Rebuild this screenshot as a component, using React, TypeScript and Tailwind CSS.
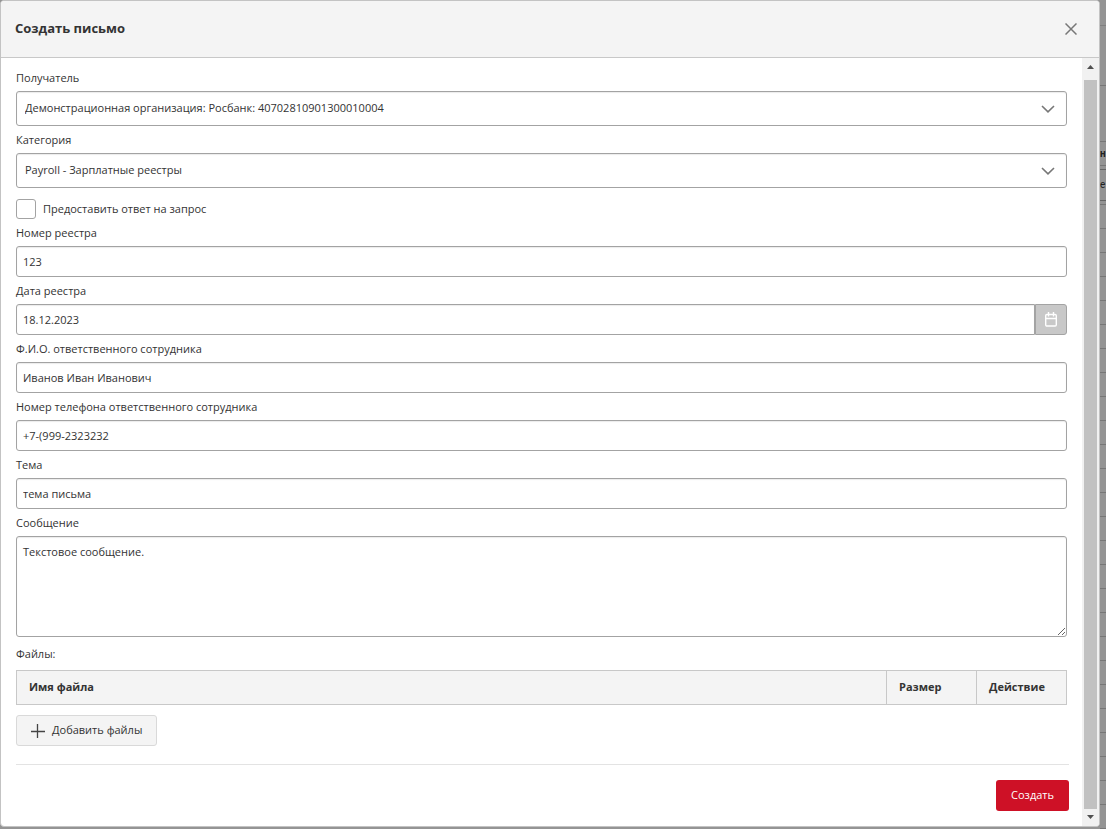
import React from 'react';

interface FieldProps {
  id: string;
  label: string;
  children: React.ReactNode;
}

const controlClass =
  'w-full rounded-[3px] border border-[#a3a3a3] bg-white text-[#333] outline-none shadow-[inset_0_1px_1px_rgba(0,0,0,0.08)]';

const Field: React.FC<FieldProps> = ({ id, label, children }) => (
  <div className="flex flex-col">
    <label htmlFor={id} className="py-1 leading-[19px]">
      {label}
    </label>
    {children}
  </div>
);

const TextField: React.FC<{ id: string; label: string; value: string }> = ({ id, label, value }) => (
  <Field id={id} label={label}>
    <input id={id} type="text" defaultValue={value} className={`${controlClass} h-[31px] px-1.5`} />
  </Field>
);

const SelectField: React.FC<{ id: string; label: string; value: string }> = ({ id, label, value }) => (
  <Field id={id} label={label}>
    <div className="relative">
      <select id={id} className={`${controlClass} h-[35px] appearance-none pl-2 pr-10`}>
        <option>{value}</option>
      </select>
      <svg
        className="pointer-events-none absolute right-3 top-3 h-3 w-[14px]"
        viewBox="0 0 14 12"
        fill="none"
        stroke="#777"
        strokeWidth="1.6"
      >
        <path d="M1 3L7 8.8L13 3" />
      </svg>
    </div>
  </Field>
);

const Scrollbar: React.FC = () => (
  <div className="flex w-[17px] shrink-0 flex-col items-center bg-[#f1f1f1]" aria-hidden="true">
    <svg className="h-[22px] w-[17px]" viewBox="0 0 17 22">
      <path d="M5 11h7L8.500 7z" fill="#505050" />
    </svg>
    <div className="w-[13px] flex-1 bg-[#c1c1c1]" />
    <svg className="h-[17px] w-[17px]" viewBox="0 0 17 17">
      <path d="M5 6h7L8.500 10z" fill="#505050" />
    </svg>
  </div>
);

const backdropRows = Array.from({ length: 26 }, (_, i) => i);

const Backdrop: React.FC = () => (
  <div className="w-1.5 shrink-0 overflow-hidden font-['Roboto','Noto_Sans',sans-serif] text-[10px] text-[#222]" aria-hidden="true">
    <div className="h-[26px] border-b border-[#808080]" />
    <div className="h-[60px] border-b border-[#777]" />
    <div className="h-[56px] border-b border-[#777]" />
    <div className="h-6 border-b border-[#777] font-bold leading-6">н</div>
    <div className="h-1 border-b border-[#666]" />
    <div className="h-[31px] border-b border-[#666] leading-[30px]">е</div>
    <div className="h-1 border-b border-[#777]" />
    {backdropRows.map((row) => (
      <div key={row} className="h-6 border-b border-[#777]" />
    ))}
  </div>
);

export default function App() {
  return (
    <div className="flex h-screen overflow-hidden bg-[#949494] font-['Open_Sans','Noto_Sans',sans-serif] text-[11px] text-[#333]">
      <div
        role="dialog"
        aria-labelledby="dialog-title"
        className="mb-0.5 flex min-w-0 flex-1 flex-col overflow-hidden rounded-[4px] border border-[#c3c3c3] bg-white"
      >
        <header className="flex h-[57px] shrink-0 items-center justify-between border-b border-[#c8c8c8] bg-[#f4f4f4] pl-3.5 pr-[22px]">
          <h1 id="dialog-title" className="text-[13px] font-bold">
            Создать письмо
          </h1>
          <button type="button" aria-label="Закрыть">
            <svg className="h-3 w-3" viewBox="0 0 12 12" stroke="#777" strokeWidth="1.5">
              <path d="M0.500 0.500L11.500 11.500M11.500 0.500L0.500 11.500" />
            </svg>
          </button>
        </header>

        <div className="flex min-h-0 flex-1">
          <form className="min-w-0 flex-1 overflow-hidden pl-[15px] pr-[13px] pt-1.5">
            <div className="pr-0.5">
              <SelectField
                id="recipient"
                label="Получатель"
                value="Демонстрационная организация: Росбанк: 40702810901300010004"
              />
              <SelectField id="category" label="Категория" value="Payroll - Зарплатные реестры" />

              <label className="flex items-center gap-[7px] pt-[11px]">
                <input
                  type="checkbox"
                  className="h-5 w-5 appearance-none rounded-[3px] border border-[#a3a3a3] bg-white"
                />
                Предоставить ответ на запрос
              </label>

              <TextField id="registry-number" label="Номер реестра" value="123" />

              <Field id="registry-date" label="Дата реестра">
                <div className="flex">
                  <input
                    id="registry-date"
                    type="text"
                    defaultValue="18.12.2023"
                    className={`${controlClass} h-[31px] min-w-0 flex-1 rounded-r-none px-1.5`}
                  />
                  <button
                    type="button"
                    aria-label="Выбрать дату"
                    className="flex w-8 items-center justify-center rounded-r-[3px] border border-[#a3a3a3] bg-[#c8c8c8]"
                  >
                    <svg className="h-[15px] w-3" viewBox="0 0 12 15" fill="none" stroke="#fff" strokeWidth="1.4">
                      <rect x="0.700" y="2.500" width="10.600" height="11.500" rx="1.200" />
                      <path d="M0.700 6.500h10.600M3.500 0v4.500M8.500 0v4.500" />
                    </svg>
                  </button>
                </div>
              </Field>

              <TextField id="employee" label="Ф.И.О. ответственного сотрудника" value="Иванов Иван Иванович" />
              <TextField id="phone" label="Номер телефона ответственного сотрудника" value="+7-(999-2323232" />
              <TextField id="subject" label="Тема" value="тема письма" />

              <Field id="message" label="Сообщение">
                <textarea
                  id="message"
                  defaultValue="Текстовое сообщение."
                  className={`${controlClass} block h-[101px] resize-y px-1.5 py-1.5 leading-[18px]`}
                />
              </Field>

              <p className="py-2 leading-[17px]">Файлы:</p>
              <table className="w-full table-fixed border-collapse bg-[#f4f4f4] text-left">
                <thead>
                  <tr className="h-[34px]">
                    <th className="border border-[#c8c8c8] px-3">Имя файла</th>
                    <th className="w-[90px] border border-[#c8c8c8] px-3">Размер</th>
                    <th className="w-[90px] border border-[#c8c8c8] px-3">Действие</th>
                  </tr>
                </thead>
              </table>

              <button
                type="button"
                className="mt-2.5 flex h-[31px] items-center gap-[7px] rounded-[3px] border border-[#d9d9d9] bg-[#f4f4f4] px-3.5"
              >
                <svg className="h-3.5 w-3.5" viewBox="0 0 14 14" stroke="#444" strokeWidth="1.3">
                  <path d="M0 7.500h14M6.500 0v14" />
                </svg>
                Добавить файлы
              </button>
            </div>

            <footer className="mt-[18px] flex justify-end border-t border-[#e3e3e3] py-[15px]">
              <button type="submit" className="h-[31px] rounded-[3px] bg-[#ce1126] px-[15px] text-white">
                Создать
              </button>
            </footer>
          </form>
          <Scrollbar />
        </div>
      </div>
      <Backdrop />
    </div>
  );
}
